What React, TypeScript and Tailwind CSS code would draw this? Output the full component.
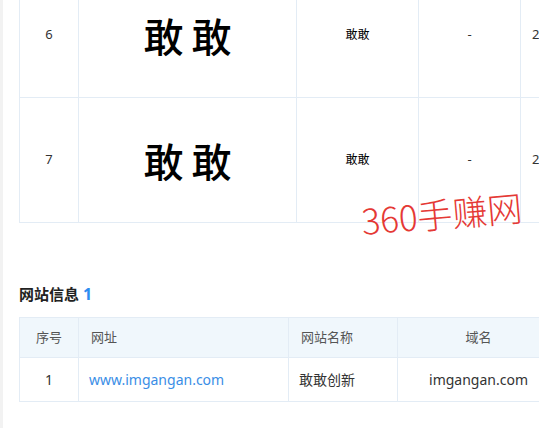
import React from "react";

const cjk = { fontFamily: '"Noto Sans", "Noto Sans CJK SC", sans-serif' };

export default function App() {
  const b = "border border-[#e3ecf5]";
  return (
    <div className="w-[539px] h-[428px] overflow-hidden bg-[#f2f2f2] pl-[3px] relative" style={cjk}>
      <div className="bg-white h-full pl-[16px] overflow-hidden">
        <div className="mt-[-28px] w-[700px]">
          <table className="border-collapse table-fixed w-[640px] text-[13px] text-[#333]">
            <colgroup>
              <col className="w-[59px]" />
              <col className="w-[218px]" />
              <col className="w-[122px]" />
              <col className="w-[102px]" />
              <col className="w-[139px]" />
            </colgroup>
            <tbody>
              {["6", "7"].map((n) => (
                <tr key={n} className="h-[125px]">
                  <td className={`${b} text-center`}>{n}</td>
                  <td className={`${b} text-center`}>
                    <span className="text-[40px] font-medium text-black tracking-[8px] pl-[8px]" style={{ fontFamily: '"Noto Sans CJK SC", sans-serif' }}>敢敢</span>
                  </td>
                  <td className={`${b} text-center text-[12px] text-black`}>敢敢</td>
                  <td className={`${b} text-center`}>-</td>
                  <td className={`${b} pl-[11px] whitespace-nowrap`}>2023-05-18 10:21:36</td>
                </tr>
              ))}
            </tbody>
          </table>

          <div className="mt-[61px] text-[15px] font-bold text-[#222] leading-[20px]">
            网站信息 <span className="text-[#2d8cf0] text-[16px]">1</span>
          </div>

          <table className="mt-[13px] border-collapse table-fixed w-[640px] text-[14px] text-[#333]">
            <colgroup>
              <col className="w-[59px]" />
              <col className="w-[210px]" />
              <col className="w-[109px]" />
              <col className="w-[162px]" />
              <col className="w-[100px]" />
            </colgroup>
            <thead>
              <tr className="h-[40px] bg-[#f0f7fc] text-[#555] text-[13px]">
                <th className={`${b} font-normal text-center`}>序号</th>
                <th className={`${b} font-normal text-left pl-[12px]`}>网址</th>
                <th className={`${b} font-normal text-left pl-[12px]`}>网站名称</th>
                <th className={`${b} font-normal text-center`}>域名</th>
                <th className={`${b} font-normal text-center`}>备案号</th>
              </tr>
            </thead>
            <tbody>
              <tr className="h-[44px]">
                <td className={`${b} text-center`}>1</td>
                <td className={`${b} pl-[10px] text-[#3a8ee6]`}>www.imgangan.com</td>
                <td className={`${b} pl-[10px]`}>敢敢创新</td>
                <td className={`${b} text-center`}>imgangan.com</td>
                <td className={`${b} text-center`}>-</td>
              </tr>
            </tbody>
          </table>
        </div>
      </div>
      <div
        className="absolute left-[361px] top-[195px] text-[35px] text-[#e53935] leading-none -rotate-[5deg] whitespace-nowrap font-light"
        style={{ fontFamily: '"Noto Sans CJK SC", sans-serif' }}
      >
        360手赚网
      </div>
    </div>
  );
}
